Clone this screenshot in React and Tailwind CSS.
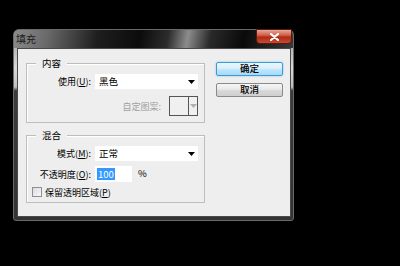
import React from 'react';

const font = { fontFamily: '"Noto Sans CJK SC", "Noto Sans", sans-serif' };

const Arrow = ({ color = '#000' }) => (
  <svg width="7" height="4" viewBox="0 0 7 4">
    <path d="M0 0h7L3.5 4z" fill={color} />
  </svg>
);

const Select = ({ value }) => (
  <div className="w-[103px] h-[15px] bg-white flex items-center justify-between pl-[4px] pr-[3px] text-[9.5px] text-black leading-none">
    <span>{value}</span>
    <Arrow />
  </div>
);

const Group = ({ title, className = '', children }) => (
  <div className={`relative border border-[#bdbdbd] shadow-[inset_1px_1px_0_#fff] ${className}`}>
    <span className="absolute -top-[7px] left-[9px] px-[6px] bg-[#eeeeee] text-[9.5px] leading-[12px] text-black">{title}</span>
    {children}
  </div>
);

const Label = ({ children, className = '' }) => (
  <span className={`w-[64px] text-right text-[9px] leading-none text-black whitespace-nowrap ${className}`}>{children}</span>
);

export default function App() {
  return (
    <div className="w-[400px] h-[266px] bg-black overflow-hidden pt-[29px] pl-[13px]" style={font}>
      <div
        className="w-[281px] h-[192px] flex flex-col rounded-t-[6px] rounded-b-[3px] border border-[#6a6a6a]"
        style={{ background: 'linear-gradient(to bottom, #9a9a9a 0%, #d8d8d8 20%, #c0c0c0 30%, #3c3c3c 32%, #333 100%)' }}
      >
        {/* Title bar */}
        <div
          className="h-[18px] flex items-start justify-between rounded-t-[5px]"
          style={{ background: 'linear-gradient(100deg, #8a8a8a 0%, #6a6a6a 12%, #1e1e1e 30%, #0c0c0c 45%, #2c2c2c 55%, #8c8c8c 62%, #2a2a2a 70%, #0a0a0a 82%, #3a3a3a 100%)' }}
        >
          <span className="pl-[2px] pt-[3px] text-[10px] leading-[12px] text-[#1a1a1a]">填充</span>
          <div
            className="-mt-px mr-px w-[36px] h-[15px] rounded-b-[4px] border border-[#5a1a10] flex items-center justify-center"
            style={{ background: 'linear-gradient(to bottom, #e8a898 0%, #d0604a 40%, #b02a14 55%, #c84a30 100%)' }}
          >
            <svg width="9" height="8" viewBox="0 0 9 8">
              <path d="M1 1l7 6M8 1L1 7" stroke="#fff" strokeWidth="2.2" strokeLinecap="round" />
            </svg>
          </div>
        </div>

        {/* Client area */}
        <div className="flex-1 ml-[3px] mr-[2px] mb-[3px] bg-[#eeeeee] border border-[#4a4a4a] flex pl-[8px] pt-[13px]">
          <div className="w-[179px] flex flex-col">
            <Group title="内容" className="h-[60px] mt-px">
              <div className="flex items-center pt-[10px]">
                <Label>使用(<u>U</u>):</Label>
                <div className="ml-[4px]"><Select value="黑色" /></div>
              </div>
              <div className="flex items-center justify-end pr-[6px] mt-[7px]">
                <span className="text-[9px] leading-none text-[#a0a0a0]">自定图案:</span>
                <div className="ml-[8px] w-[29px] h-[20px] border border-[#555] bg-[#f0f0f0] flex">
                  <div className="w-[19px] border-r border-[#555]"></div>
                  <div className="flex-1 flex items-center justify-center"><Arrow color="#b0b0b0" /></div>
                </div>
              </div>
            </Group>
            <Group title="混合" className="h-[68px] mt-[12px]">
              <div className="flex items-center pt-[10px]">
                <Label>模式(<u>M</u>):</Label>
                <div className="ml-[4px]"><Select value="正常" /></div>
              </div>
              <div className="flex items-center mt-[5px]">
                <Label>不透明度(<u>O</u>):</Label>
                <div className="ml-[4px] w-[37px] h-[16px] bg-white flex items-center pl-[2px]">
                  <span className="bg-[#3399ff] text-white text-[9.5px] leading-[12px] px-px">100</span>
                </div>
                <span className="ml-[6px] text-[9.5px] leading-none text-black">%</span>
              </div>
              <div className="flex items-center mt-[5px] pl-[5px]">
                <div className="w-[10px] h-[10px] border border-[#8f8f8f] bg-gradient-to-br from-[#dcdcdc] to-[#f8f8f8]"></div>
                <span className="ml-[3px] text-[9px] leading-none text-black">保留透明区域(<u>P</u>)</span>
              </div>
            </Group>
          </div>

          <div className="ml-[11px] flex flex-col">
            <button
              className="w-[67px] h-[14px] rounded-[2px] border border-[#3c9ad6] shadow-[0_0_2px_#7cc4f0] text-[9.5px] leading-none text-black font-medium flex items-center justify-center"
              style={{ background: 'linear-gradient(to bottom, #eaf6fd 0%, #d9f0fc 45%, #bee6fd 55%, #a7d9f5 100%)' }}
            >
              确定
            </button>
            <button
              className="mt-[7px] w-[67px] h-[14px] rounded-[2px] border border-[#8a8a8a] text-[9.5px] leading-none text-black font-medium flex items-center justify-center"
              style={{ background: 'linear-gradient(to bottom, #f6f6f6 0%, #e8e8e8 45%, #d8d8d8 55%, #cfcfcf 100%)' }}
            >
              取消
            </button>
          </div>
        </div>
      </div>
    </div>
  );
}
